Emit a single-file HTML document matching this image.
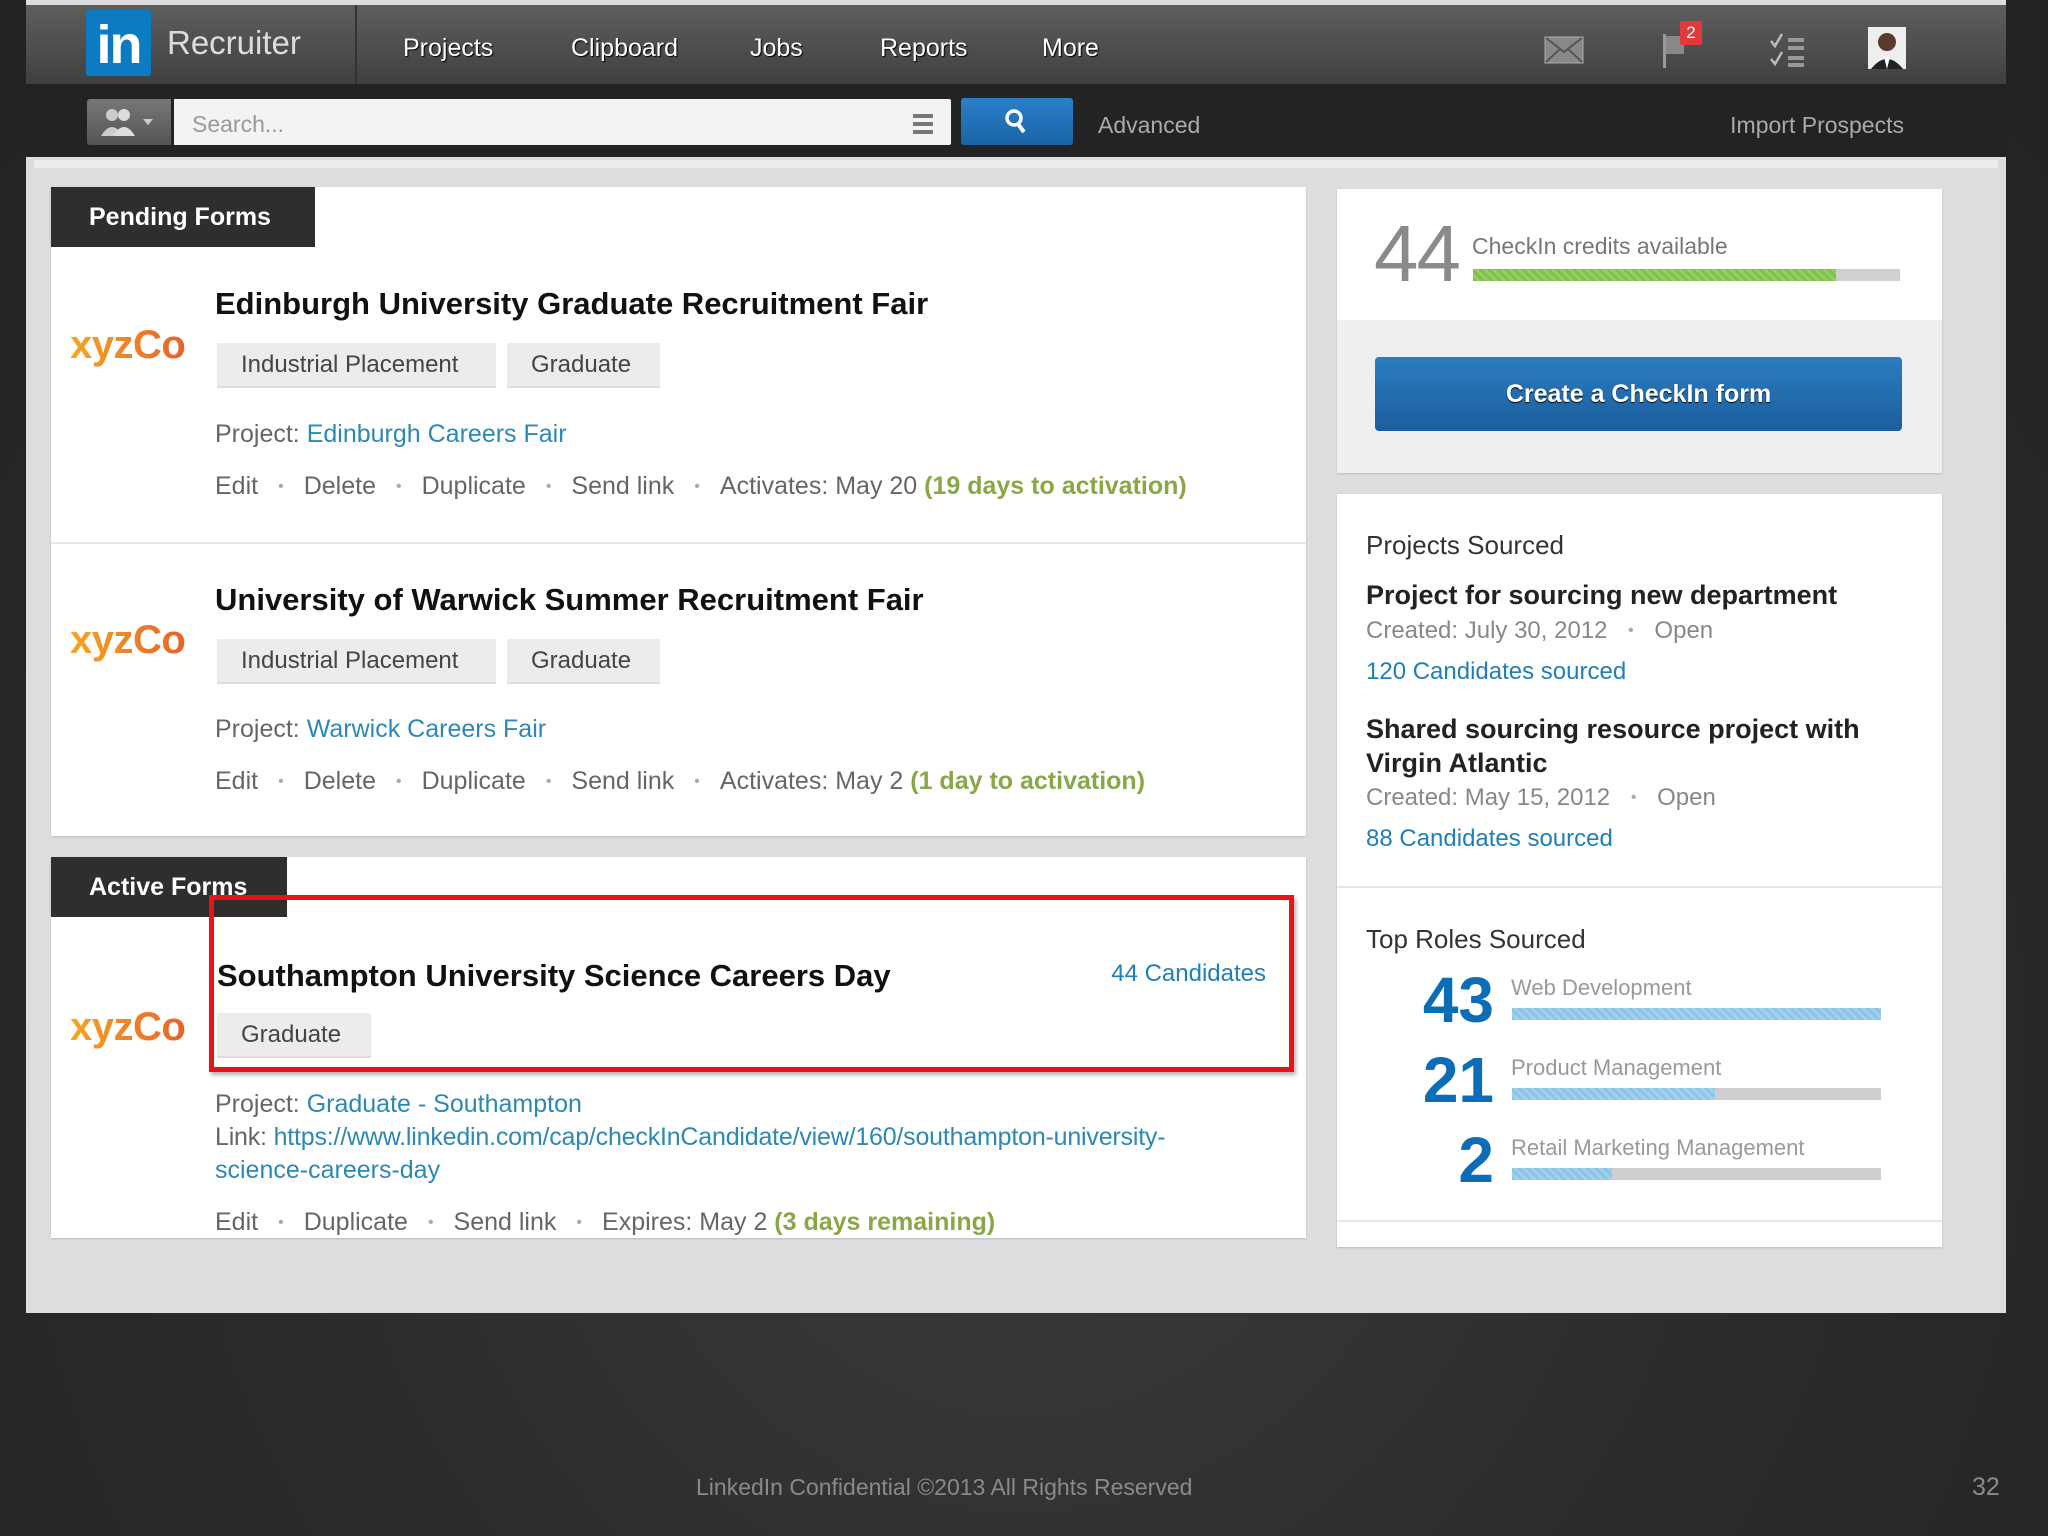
<!DOCTYPE html>
<html><head><meta charset="utf-8"><style>
*{margin:0;padding:0;box-sizing:border-box}
body{width:2048px;height:1536px;background:radial-gradient(ellipse at 50% 70%,#3c3b3e 0%,#2a2a2c 55%,#222224 100%);font-family:"Liberation Sans",Arial,sans-serif;position:relative;overflow:hidden}
.a{position:absolute;white-space:nowrap}
#screen{position:absolute;left:26px;top:0;width:1980px;height:1313px;background:#dddde0;overflow:hidden}
#nav{position:absolute;left:0;top:5px;width:1980px;height:79px;background:linear-gradient(#5e5f5d,#3f403f)}
#sbar{position:absolute;left:0;top:84px;width:1980px;height:73px;background:#232324}
.nv{position:absolute;top:29px;font-size:25px;color:#fff;text-shadow:1px 1px 1px #000}
.card{position:absolute;background:#fff;box-shadow:0 1px 2px rgba(0,0,0,.15)}
.tab{position:absolute;background:#2e2e2e;color:#fff;font-size:25px;font-weight:bold;padding-left:38px;line-height:60px}
.logo{position:absolute;font-size:40px;font-weight:bold;letter-spacing:-0.5px;background:linear-gradient(90deg,#f5a623,#e8622a);-webkit-background-clip:text;background-clip:text;color:transparent}
.title{position:absolute;font-size:31px;font-weight:bold;color:#111}
.tag{position:absolute;height:45px;background:#ececec;border-bottom:2px solid #ddd;font-size:24px;color:#444;line-height:44px;padding:0 24px}
.ln{position:absolute;font-size:25px;color:#666}
.ln b{color:#88a848;font-weight:bold}
.blue{color:#2c88b4}
.dot{color:#aaa;margin:0 20px;font-size:16px;vertical-align:3px}
.rb{position:absolute;height:12px;background:#cfcfd2;left:1486px;width:369px}
.rb i{display:block;height:12px;background:repeating-linear-gradient(45deg,#8ec4e6 0 3px,#a3d0ec 3px 6px)}
.num{position:absolute;font-size:64px;font-weight:bold;color:#0b6db5;text-align:right;width:120px}
.rl{position:absolute;font-size:22px;color:#999;left:1485px}
</style></head><body>
<div id="screen">
 <div id="nav">
  <div class="a" style="left:60px;top:5px;width:65px;height:66px;background:#0c7bc2;border-radius:3px;color:#fff;font-weight:bold;font-size:54px;line-height:70px;text-align:center;letter-spacing:-2px">in</div>
  <div class="a" style="left:141px;top:19px;font-size:33px;color:#ddd">Recruiter</div>
  <div class="a" style="left:329px;top:0;width:2px;height:79px;background:#333"></div>
  <div class="nv" style="left:377px">Projects</div>
  <div class="nv" style="left:545px">Clipboard</div>
  <div class="nv" style="left:724px">Jobs</div>
  <div class="nv" style="left:854px">Reports</div>
  <div class="nv" style="left:1016px">More</div>
  <svg class="a" style="left:1518px;top:31px" width="40" height="28"><rect x="1" y="1" width="38" height="26" fill="#888" stroke="#aaa"/><path d="M2 2 L20 16 L38 2 M2 26 L16 13 M38 26 L24 13" stroke="#555" stroke-width="2" fill="none"/></svg>
  <svg class="a" style="left:1634px;top:25px" width="30" height="40"><rect x="3" y="4" width="3" height="34" fill="#999"/><path d="M6 6 H24 V24 H6 Z" fill="#888"/></svg>
  <div class="a" style="left:1654px;top:16px;width:22px;height:24px;background:#e03a3a;color:#fff;font-size:17px;text-align:center;line-height:24px;border-radius:2px">2</div>
  <svg class="a" style="left:1742px;top:27px" width="40" height="36"><path d="M3 9 l4 5 l7 -12 M3 27 l4 5 l7 -12" stroke="#bbb" stroke-width="2.5" fill="none"/><rect x="20" y="6" width="16" height="4" fill="#999"/><rect x="20" y="14" width="16" height="4" fill="#999"/><rect x="20" y="24" width="16" height="4" fill="#999"/><rect x="20" y="31" width="16" height="4" fill="#999"/></svg>
  <svg class="a" style="left:1842px;top:22px" width="38" height="42"><rect width="38" height="42" fill="#eee"/><circle cx="19" cy="15" r="9" fill="#5a3a2a"/><path d="M3 42 Q19 22 35 42Z" fill="#222"/><path d="M16 30 L19 42 L22 30Z" fill="#fff"/></svg>
 </div>
 <div id="sbar">
  <div class="a" style="left:61px;top:15px;width:84px;height:46px;background:linear-gradient(#777,#555);border-radius:3px 0 0 3px"></div>
  <svg class="a" style="left:72px;top:22px" width="66" height="32"><circle cx="14" cy="9" r="6" fill="#ccc"/><path d="M3 30 Q14 12 25 30Z" fill="#ccc"/><circle cx="26" cy="9" r="6" fill="#ddd"/><path d="M15 30 Q26 12 37 30Z" fill="#ddd"/><path d="M45 13 h10 l-5 6z" fill="#ccc"/></svg>
  <div class="a" style="left:148px;top:15px;width:777px;height:46px;background:#f3f3f3;border-radius:0 2px 2px 0"></div>
  <div class="a" style="left:166px;top:27px;font-size:23px;color:#999">Search...</div>
  <div class="a" style="left:887px;top:30px;width:20px;height:4px;background:#777;box-shadow:0 8px 0 #777,0 16px 0 #777"></div>
  <div class="a" style="left:935px;top:14px;width:112px;height:47px;background:linear-gradient(#2a80c8,#1a64a8);border-radius:3px"></div>
  <svg class="a" style="left:977px;top:24px" width="28" height="28"><circle cx="11" cy="10" r="7" stroke="#fff" stroke-width="3.5" fill="none"/><path d="M15 16 L21 24" stroke="#fff" stroke-width="4"/></svg>
  <div class="a" style="left:1072px;top:28px;font-size:23px;color:#aaa">Advanced</div>
  <div class="a" style="right:102px;top:28px;font-size:23px;color:#aaa">Import Prospects</div>
 </div>
 <div class="a" style="left:8px;top:160px;width:1964px;height:8px;background:#ececee"></div>

 <div class="card" style="left:25px;top:187px;width:1255px;height:649px"></div>
 <div class="tab" style="left:25px;top:187px;width:264px">Pending Forms</div>
 <div class="a" style="left:25px;top:542px;width:1255px;height:2px;background:#e6e6e6"></div>
 <div class="logo" style="left:44px;top:323px">xyzCo</div>
 <div class="title" style="left:189px;top:286px">Edinburgh University Graduate Recruitment Fair</div>
 <div class="tag" style="left:191px;top:343px;width:279px">Industrial Placement</div>
 <div class="tag" style="left:481px;top:343px;width:153px">Graduate</div>
 <div class="ln" style="left:189px;top:420px">Project: <span class="blue">Edinburgh Careers Fair</span></div>
 <div class="ln" style="left:189px;top:472px">Edit<span class="dot">•</span>Delete<span class="dot">•</span>Duplicate<span class="dot">•</span>Send link<span class="dot">•</span>Activates: May 20 <b>(19 days to activation)</b></div>

 <div class="logo" style="left:44px;top:618px">xyzCo</div>
 <div class="title" style="left:189px;top:582px">University of Warwick Summer Recruitment Fair</div>
 <div class="tag" style="left:191px;top:639px;width:279px">Industrial Placement</div>
 <div class="tag" style="left:481px;top:639px;width:153px">Graduate</div>
 <div class="ln" style="left:189px;top:715px">Project: <span class="blue">Warwick Careers Fair</span></div>
 <div class="ln" style="left:189px;top:767px">Edit<span class="dot">•</span>Delete<span class="dot">•</span>Duplicate<span class="dot">•</span>Send link<span class="dot">•</span>Activates: May 2 <b>(1 day to activation)</b></div>

 <div class="card" style="left:25px;top:857px;width:1255px;height:381px"></div>
 <div class="tab" style="left:25px;top:857px;width:236px">Active Forms</div>
 <div class="logo" style="left:44px;top:1005px">xyzCo</div>
 <div class="title" style="left:191px;top:958px">Southampton University Science Careers Day</div>
 <div class="a" style="right:740px;top:960px;font-size:24px;color:#1f7fb8">44 Candidates</div>
 <div class="tag" style="left:191px;top:1013px;width:154px">Graduate</div>
 <div class="a" style="left:183px;top:895px;width:1085px;height:177px;border:5px solid #e8141c;box-shadow:2px 3px 4px rgba(0,0,0,.3)"></div>
 <div class="ln" style="left:189px;top:1090px">Project: <span class="blue">Graduate - Southampton</span></div>
 <div class="ln" style="left:189px;top:1123px;letter-spacing:-0.2px">Link: <span class="blue">https://www.linkedin.com/cap/checkInCandidate/view/160/southampton-university-</span></div>
 <div class="ln blue" style="left:189px;top:1156px">science-careers-day</div>
 <div class="ln" style="left:189px;top:1208px">Edit<span class="dot">•</span>Duplicate<span class="dot">•</span>Send link<span class="dot">•</span>Expires: May 2 <b>(3 days remaining)</b></div>

 <div class="card" style="left:1311px;top:189px;width:605px;height:284px;background:#efeff1"></div>
 <div class="a" style="left:1311px;top:189px;width:605px;height:131px;background:#fff"></div>
 <div class="a" style="left:1348px;top:208px;font-size:80px;color:#8a8a8a;letter-spacing:-2px">44</div>
 <div class="a" style="left:1446px;top:233px;font-size:23px;color:#777">CheckIn credits available</div>
 <div class="a" style="left:1447px;top:269px;width:427px;height:12px;background:#d0d0d3"><div style="width:363px;height:12px;background:repeating-linear-gradient(45deg,#7fc24a 0 3px,#95cf62 3px 6px)"></div></div>
 <div class="a" style="left:1349px;top:357px;width:527px;height:74px;background:linear-gradient(#2c7cc0,#1a5e9e);border-radius:4px;color:#fff;font-size:25px;font-weight:bold;text-align:center;line-height:74px;text-shadow:0 1px 1px #000">Create a CheckIn form</div>

 <div class="card" style="left:1311px;top:494px;width:605px;height:753px"></div>
 <div class="a" style="left:1340px;top:530px;font-size:26px;color:#333">Projects Sourced</div>
 <div class="a" style="left:1340px;top:580px;font-size:27px;font-weight:bold;color:#222">Project for sourcing new department</div>
 <div class="a" style="left:1340px;top:617px;font-size:24px;color:#888">Created: July 30, 2012 <span class="dot" style="margin:0 14px">•</span> Open</div>
 <div class="a" style="left:1340px;top:658px;font-size:24px;color:#1f7fb8">120 Candidates sourced</div>
 <div class="a" style="left:1340px;top:714px;font-size:27px;font-weight:bold;color:#222">Shared sourcing resource project with</div>
 <div class="a" style="left:1340px;top:748px;font-size:27px;font-weight:bold;color:#222">Virgin Atlantic</div>
 <div class="a" style="left:1340px;top:784px;font-size:24px;color:#888">Created: May 15, 2012 <span class="dot" style="margin:0 14px">•</span> Open</div>
 <div class="a" style="left:1340px;top:825px;font-size:24px;color:#1f7fb8">88 Candidates sourced</div>
 <div class="a" style="left:1311px;top:886px;width:605px;height:2px;background:#e6e6e6"></div>
 <div class="a" style="left:1340px;top:924px;font-size:26px;color:#333">Top Roles Sourced</div>
 <div class="num" style="left:1348px;top:963px">43</div>
 <div class="rl" style="top:975px">Web Development</div>
 <div class="rb" style="top:1008px"><i style="width:100%"></i></div>
 <div class="num" style="left:1348px;top:1043px">21</div>
 <div class="rl" style="top:1055px">Product Management</div>
 <div class="rb" style="top:1088px"><i style="width:55%"></i></div>
 <div class="num" style="left:1348px;top:1123px">2</div>
 <div class="rl" style="top:1135px">Retail Marketing Management</div>
 <div class="rb" style="top:1168px"><i style="width:27%"></i></div>
 <div class="a" style="left:1311px;top:1220px;width:605px;height:2px;background:#e6e6e6"></div>
</div>
<div class="a" style="left:696px;top:1474px;font-size:23px;color:#8a8a8a">LinkedIn Confidential ©2013 All Rights Reserved</div>
<div class="a" style="left:1972px;top:1473px;font-size:25px;color:#8a8a8a">32</div>
</body></html>
